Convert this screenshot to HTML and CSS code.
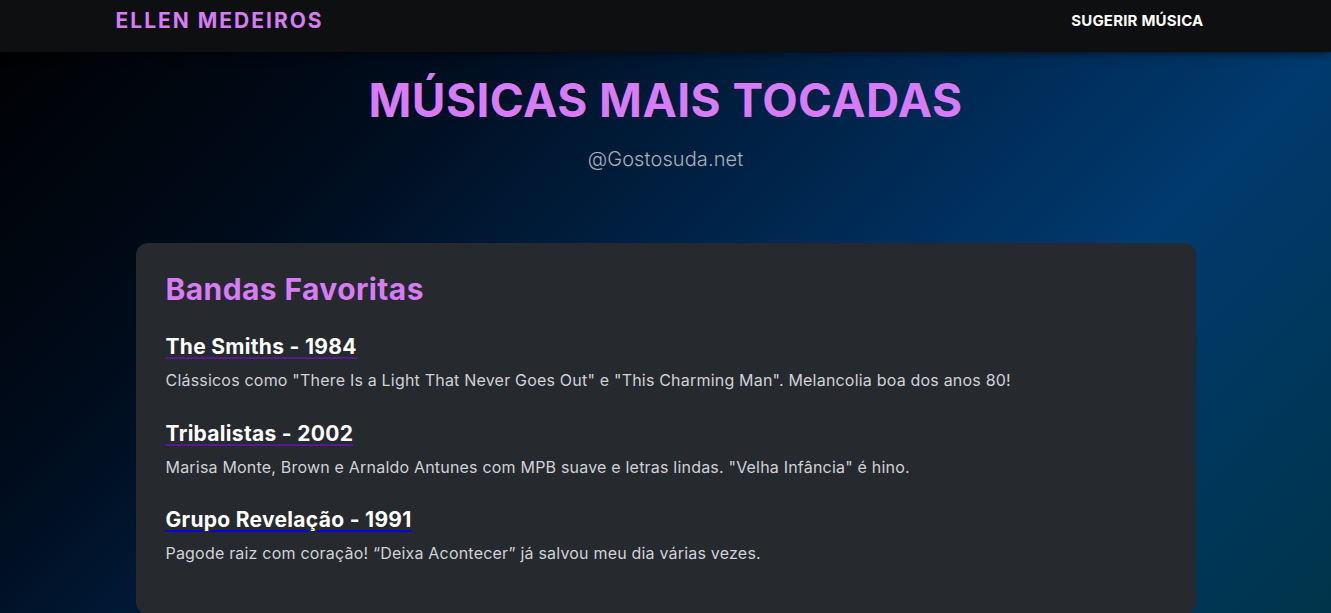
FILE: index.html
```html
<!DOCTYPE html>
<html lang="pt-BR">
<head>
<meta charset="utf-8">
<title>Músicas Mais Tocadas</title>
<link rel="stylesheet" href="styles.css">
</head>
<body>
  <nav class="navbar">
    <div class="nav-inner">
      <a class="brand" href="#">ELLEN MEDEIROS</a>
      <a class="nav-link" href="#">SUGERIR MÚSICA</a>
    </div>
  </nav>
  <header class="hero">
    <h1 class="hero-title">MÚSICAS MAIS TOCADAS</h1>
    <p class="hero-sub">@Gostosuda.net</p>
  </header>
  <main class="container">
    <section class="card">
      <h2 class="card-title">Bandas Favoritas</h2>
      <article class="item">
        <h3 class="item-title"><a class="item-link visited" href="#">The Smiths - 1984</a></h3>
        <p class="item-text">Clássicos como "There Is a Light That Never Goes Out" e "This Charming Man". Melancolia boa dos anos 80!</p>
      </article>
      <article class="item">
        <h3 class="item-title"><a class="item-link visited" href="#">Tribalistas - 2002</a></h3>
        <p class="item-text">Marisa Monte, Brown e Arnaldo Antunes com MPB suave e letras lindas. "Velha Infância" é hino.</p>
      </article>
      <article class="item">
        <h3 class="item-title"><a class="item-link fresh" href="#">Grupo Revelação - 1991</a></h3>
        <p class="item-text">Pagode raiz com coração! “Deixa Acontecer” já salvou meu dia várias vezes.</p>
      </article>
    </section>
  </main>
</body>
</html>
```

FILE: styles.css
```css
* { box-sizing: border-box; }

html, body {
  margin: 0;
  padding: 0;
}

body {
  min-height: 100vh;
  font-family: "Inter", "Liberation Sans", sans-serif;
  color: #fff;
  background: linear-gradient(135deg, #000000 0%, #000c1c 25%, #002a55 55%, #003a6e 71%, #00344a 100%);
  overflow: hidden;
}

.navbar {
  background: #0e0f11;
  height: 52px;
  box-shadow: 0 2px 8px rgba(0, 0, 0, 0.55);
  position: relative;
  z-index: 2;
}

.nav-inner {
  max-width: 1100px;
  margin: 0 auto;
  height: 41px;
  display: flex;
  align-items: center;
  justify-content: space-between;
}

.brand {
  font-size: 21px;
  line-height: 1;
  font-weight: 700;
  color: #d77cf6;
  text-decoration: none;
  letter-spacing: 2px;
}

.nav-link {
  font-size: 15px;
  line-height: 1;
  font-weight: 700;
  color: #fff;
  text-decoration: none;
  padding: 0 12px;
  letter-spacing: 0.2px;
}

.hero {
  text-align: center;
  padding-top: 21px;
}

.hero-title {
  margin: 0;
  font-size: 46px;
  line-height: 1.2;
  font-weight: 700;
  color: #d77cf6;
  letter-spacing: 0.45px;
}

.hero-sub {
  margin: 16px 0 0;
  font-size: 20px;
  line-height: 1.5;
  font-weight: 300;
  color: #a8b0ba;
  letter-spacing: 0.1px;
}

.container {
  max-width: 1100px;
  margin: 69px auto 0;
  padding: 0 20px;
}

.card {
  background: #26292e;
  border-radius: 12px;
  padding: 28px 30px 21px;
}

.card-title {
  margin: 0 0 26px;
  font-size: 30px;
  line-height: 1.2;
  font-weight: 700;
  color: #d77cf6;
  letter-spacing: 0.4px;
}

.item {
  margin-bottom: 25px;
}

.item-title {
  margin: 0 0 7px;
  font-size: 21px;
  line-height: 1.3;
  font-weight: 700;
  letter-spacing: 0.3px;
}

.item-link {
  color: #fff;
  text-decoration: underline;
  text-decoration-thickness: 2px;
  text-underline-offset: 3px;
}

.item-link.visited { text-decoration-color: #551a8b; }
.item-link.fresh { text-decoration-color: #0000ee; }

.item-text {
  margin: 0;
  font-size: 16px;
  line-height: 1.7;
  color: #cfd2d6;
  letter-spacing: 0.2px;
}
```
